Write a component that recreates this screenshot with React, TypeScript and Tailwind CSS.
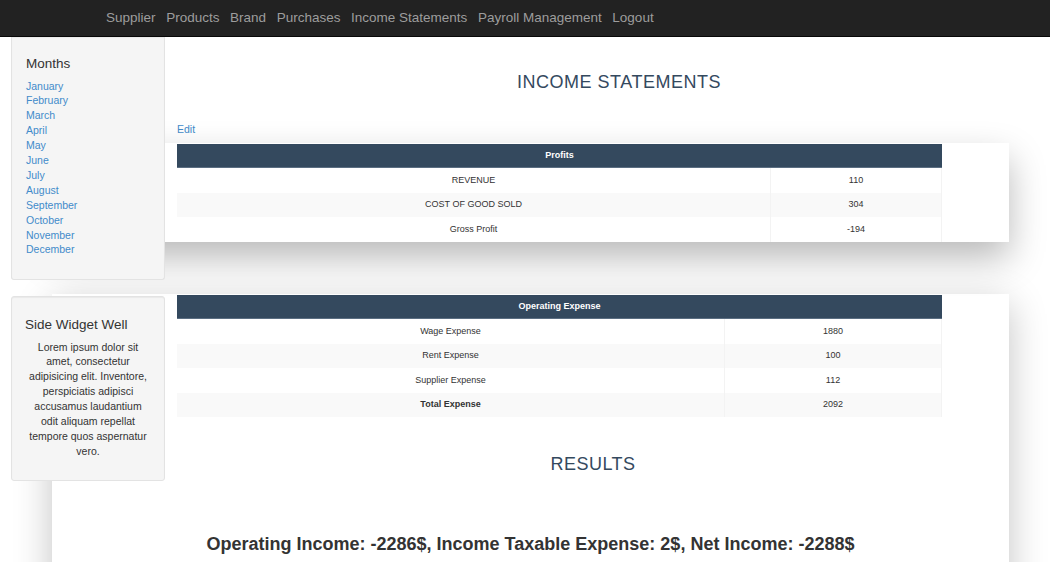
import React from "react";

const navLinks = [
  "Supplier",
  "Products",
  "Brand",
  "Purchases",
  "Income Statements",
  "Payroll Management",
  "Logout",
];

const months = [
  "January",
  "February",
  "March",
  "April",
  "May",
  "June",
  "July",
  "August",
  "September",
  "October",
  "November",
  "December",
];

type RowProps = {
  label: string;
  value: string;
  w1: string;
  striped?: boolean;
  bold?: boolean;
};

function Row({ label, value, w1, striped, bold }: RowProps) {
  return (
    <div
      className={`flex h-[24.5px] items-center text-[9px] text-[#333] ${
        striped ? "bg-[#f9f9f9]" : "bg-white"
      }`}
    >
      <div
        className={`flex h-full items-center justify-center border-r border-[#f3f3f3] ${w1} ${
          bold ? "font-bold" : ""
        }`}
      >
        {label}
      </div>
      <div className="flex h-full flex-1 items-center justify-center border-r border-[#f3f3f3]">
        {value}
      </div>
    </div>
  );
}

function Header({ title }: { title: string }) {
  return (
    <div className="flex h-[24px] items-center justify-center border-b border-[#5b6e82] bg-[#34495e] text-[9px] font-bold text-white">
      {title}
    </div>
  );
}

export default function App() {
  return (
    <div className="relative min-h-[562px] overflow-hidden bg-white font-['Liberation_Sans',Arial,sans-serif] text-[#333]">
      <nav className="relative z-30 flex h-[37px] items-center gap-[10.6px] border-b border-[#080808] bg-[#222] pl-[106px] text-[13.5px] text-[#9d9d9d]">
        {navLinks.map((l) => (
          <a key={l} className="cursor-pointer">
            {l}
          </a>
        ))}
      </nav>

      <div className="relative">
        <aside className="absolute left-[11px] top-0 z-20 flex w-[154px] flex-col gap-[16px]">
          <div className="h-[243px] rounded-b-[3px] border border-t-0 border-[#e3e3e3] bg-[#f5f5f5] px-[14px] pt-[19px] shadow-[inset_0_1px_1px_rgba(0,0,0,0.05)]">
            <h4 className="mb-[7.5px] text-[13.5px] leading-[15px] text-[#333]">Months</h4>
            <ul className="flex flex-col">
              {months.map((m) => (
                <li key={m} className="text-[10.5px] leading-[14.9px] text-[#428bca]">
                  <a className="cursor-pointer">{m}</a>
                </li>
              ))}
            </ul>
          </div>
          <div className="h-[185px] rounded-[3px] border border-[#e3e3e3] bg-[#f5f5f5] px-[13px] pt-[19.5px] shadow-[inset_0_1px_1px_rgba(0,0,0,0.05)]">
            <h4 className="mb-[8px] text-[13.5px] leading-[15px] text-[#333]">Side Widget Well</h4>
            <p className="text-center text-[10.5px] leading-[14.9px] text-[#333]">
              Lorem ipsum dolor sit
              <br />
              amet, consectetur
              <br />
              adipisicing elit. Inventore,
              <br />
              perspiciatis adipisci
              <br />
              accusamus laudantium
              <br />
              odit aliquam repellat
              <br />
              tempore quos aspernatur
              <br />
              vero.
            </p>
          </div>
        </aside>

        <main className="ml-[52px] flex w-[957px] flex-col">
          <div className="pl-[125px] pt-[35px]">
            <h1 className="pl-[52px] text-center text-[18px] leading-[20px] tracking-[0.5px] text-[#34495e]">
              INCOME STATEMENTS
            </h1>
            <div className="mt-[29.5px] text-[10.5px] leading-[15px] text-[#428bca]">
              <a className="cursor-pointer">Edit</a>
            </div>
          </div>

          <section className="relative z-[2] mt-[6.5px] bg-white pl-[125px] pt-[1px] shadow-[0_16px_36px_rgba(0,0,0,0.28)]">
            <div className="w-[765px]">
              <Header title="Profits" />
              <Row label="REVENUE" value="110" w1="w-[594px]" />
              <Row label="COST OF GOOD SOLD" value="304" w1="w-[594px]" striped />
              <Row label="Gross Profit" value="-194" w1="w-[594px]" />
            </div>
          </section>

          <section className="relative z-[1] mt-[52.5px] bg-white pb-[40px] pt-[1px] shadow-[0_10px_36px_rgba(0,0,0,0.24)]">
            <div className="pl-[125px]">
              <div className="w-[765px]">
                <Header title="Operating Expense" />
                <Row label="Wage Expense" value="1880" w1="w-[548px]" />
                <Row label="Rent Expense" value="100" w1="w-[548px]" striped />
                <Row label="Supplier Expense" value="112" w1="w-[548px]" />
                <Row label="Total Expense" value="2092" w1="w-[548px]" striped bold />
              </div>
              <h2 className="mt-[37px] text-center text-[18px] leading-[20px] tracking-[0.5px] text-[#34495e]">
                RESULTS
              </h2>
            </div>
            <p className="mt-[60px] text-center text-[18px] font-bold leading-[20px] text-[#333]">
              Operating Income: -2286$, Income Taxable Expense: 2$, Net Income: -2288$
            </p>
          </section>
        </main>
      </div>
    </div>
  );
}
